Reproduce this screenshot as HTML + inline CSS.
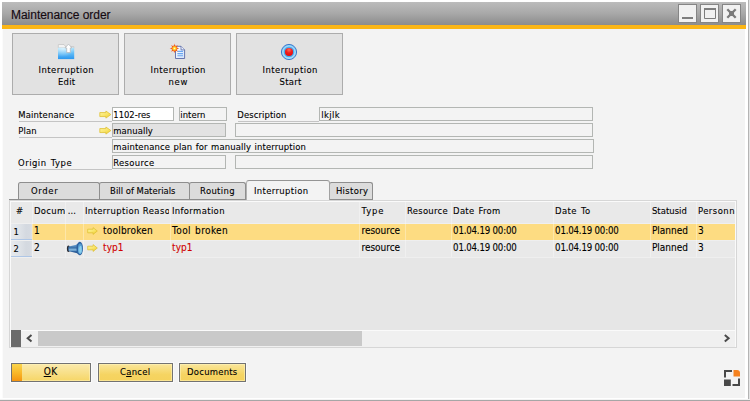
<!DOCTYPE html>
<html lang="en">
<head>
<meta charset="utf-8">
<title>Maintenance order</title>
<style>
html,body{margin:0;padding:0;background:#fff;}
body{width:750px;height:401px;position:relative;overflow:hidden;}
.win{position:absolute;left:0;top:0;width:750px;height:401px;overflow:hidden;}
.win div,.win span,.win svg,.win i{position:absolute;box-sizing:border-box;}
.win u{text-decoration:underline;text-underline-offset:1px;}
.t{white-space:nowrap;line-height:14px;height:14px;font-family:"DejaVu Sans Condensed","DejaVu Sans","Liberation Sans",sans-serif;font-stretch:condensed;font-size:9.4px;color:#000;-webkit-text-stroke:0.1px currentColor;}
.edgeR{left:748px;top:0;width:2px;height:401px;background:linear-gradient(90deg,#b4b4b4 0,#b4b4b4 1px,#e4e4e4 1px);}
.edgeB{left:0;top:399px;width:750px;height:2px;background:linear-gradient(#f2f2f2 0,#f2f2f2 .8px,#a6a6a6 .8px);}
.bodybg{left:2px;top:29px;width:743px;height:369px;background:#f3f3f3;border-left:1px solid #fbfbfb;}
.titlebar{left:2px;top:2px;width:744px;height:27px;background:linear-gradient(#bcbcbc 0,#a9a9a9 11px,#8d8d8d 22.6px,#fbb616 22.6px,#fbb616 27px);}
.wc{top:2px;width:19px;height:19px;border:1px solid #858585;background:#f1f1f1;}
.tb{top:33px;width:107px;height:62px;border:1px solid #acacac;background:#e2e2e2;}
.fld{height:14px;border:1px solid #b3b6b3;background:#f3f3f3;}
.fld.w{background:#fff;}
.fld.g{background:#e2e2e2;}
.ul{height:1px;background:#c4c4c4;}
.tab{top:182px;height:17px;border:1px solid #8e8e8e;border-bottom:none;border-radius:2.5px 2.5px 0 0;background:#dcdcdc;}
.tab.on{top:180px;height:20px;background:#f3f3f3;border-color:#949494 #a2a2a2 #949494 #b2b2b2;border-radius:3px 3px 0 0;}
.tabline{top:199px;height:1px;background:#8e8e8e;}
.panel{left:9px;top:200px;width:728px;height:148px;border:1px solid #d6d6d6;background:#fafafa;}
.grid{left:11px;top:202px;width:724px;height:128px;background:#e6e6e6;}
.ghead{left:0;top:0;width:724px;height:21px;background:#e9e9e9;}
.grow{left:0;width:724px;height:16px;}
.grow.sel{top:22px;background:#fddc82;}
.grow.r2{top:39px;background:#e9e9e9;}
.sepline{left:0;width:724px;height:1px;background:#efefef;}
.vsep{top:0;width:1px;height:55px;background:rgba(255,255,255,.32);}
.rn{left:0;width:21px;height:16px;background:linear-gradient(90deg,#e6e9ed 0,#dfe3e8 40%,#d4d9e0 72%,#d5dae1 88%,#dee2e7 100%);border-bottom:1px solid #aec6e6;}
.sb{left:11px;top:331px;width:724px;height:16px;background:#f0f0f0;}
.sbdark{left:0;top:-1px;width:10px;height:17px;background:#6b6b6b;}
.sbthumb{left:27px;top:0;width:324px;height:15px;background:#c9c9c9;}
.ybtn{top:363px;height:19px;border:1px solid #727272;background:linear-gradient(#fae69c 0,#f7dc7a 35%,#f5d462 62%,#f5d25c 100%);box-shadow:inset 0 0 0 1px rgba(255,244,190,.55),0 0 0 1px rgba(255,255,255,.55);}
.ybtn.ok{background:linear-gradient(#fbeaac 0,#f8e08a 50%,#f6d666 100%);}
.ybtn .focus{left:0;top:0;width:10px;height:17px;background:linear-gradient(#fbd54c 0,#f8b628 55%,#f59411 100%);}

</style>
</head>
<body>
<div class="win">
<div class="edgeR"></div><div class="edgeB"></div>
<div class="bodybg"></div>
<div class="titlebar">
  <div class="wc" style="left:676px"><svg width="17" height="17" viewBox="0 0 17 17" style="left:0;top:0"><rect x="3" y="12" width="11" height="2" fill="#7d7d7d"/></svg></div>
  <div class="wc" style="left:698px"><svg width="17" height="17" viewBox="0 0 17 17" style="left:0;top:0"><path d="M3.5 4 H14.5 V13.5 H3.5 Z" fill="none" stroke="#7d7d7d" stroke-width="1"/><rect x="3" y="3" width="12" height="2" fill="#7d7d7d"/></svg></div>
  <div class="wc" style="left:720px"><svg width="17" height="17" viewBox="0 0 17 17" style="left:0;top:0"><path d="M4.3 4.3 L12.7 12.7 M12.7 4.3 L4.3 12.7" stroke="#7b7b7b" stroke-width="2.3" fill="none"/><rect x="6" y="6" width="5" height="5" fill="#7b7b7b"/></svg></div>
</div>

<div class="tb" style="left:12px">
<svg width="18" height="17" viewBox="0 0 18 17" style="left:44px;top:10px">
 <defs><linearGradient id="fg" x1="0" y1="0" x2="0" y2="1"><stop offset="0" stop-color="#aee4fc"/><stop offset=".45" stop-color="#66bff7"/><stop offset="1" stop-color="#2b97ef"/></linearGradient>
 <radialGradient id="fh" cx=".3" cy=".1" r=".7"><stop offset="0" stop-color="#fff" stop-opacity=".55"/><stop offset="1" stop-color="#fff" stop-opacity="0"/></radialGradient></defs>
 <path d="M1.3 3.9 V.5 H7 L8.8 2.8 V3.9 Z" fill="#f3f3f3" stroke="#c6c6c6" stroke-width=".8"/>
 <path d="M9 2.5 H16.8 V4.2 H9 Z" fill="#eeeeee" stroke="#c2c2c2" stroke-width=".7"/>
 <rect x="1" y="3.8" width="16.2" height="11.3" fill="url(#fg)"/>
 <rect x="1" y="3.8" width="16.2" height="11.3" fill="url(#fh)"/>
 <path d="M11.5 0.1 L15 3.9 H13.3 V8.6 H9.7 V3.9 H8 Z" fill="#fff" stroke="#b4b8bc" stroke-width=".8" stroke-linejoin="round"/>
</svg>
</div>
<div class="tb" style="left:124px">
<svg width="20" height="18" viewBox="0 0 20 18" style="left:44px;top:9px">
 <defs><linearGradient id="dg" x1="0" y1="0" x2="1" y2="1"><stop offset="0" stop-color="#ffffff"/><stop offset="1" stop-color="#d2e3fa"/></linearGradient>
 <radialGradient id="sg" cx=".5" cy=".5" r=".5"><stop offset="0" stop-color="#fffbe0"/><stop offset=".45" stop-color="#ffd727"/><stop offset=".8" stop-color="#fb8a1c"/><stop offset="1" stop-color="#f0501c"/></radialGradient></defs>
 <path d="M6.5 3.3 H12 L15.6 6.9 V15.5 H6.5 Z" fill="url(#dg)" stroke="#5a69a6" stroke-width=".9"/>
 <path d="M12 3.3 V6.9 H15.6" fill="#eaf1fc" stroke="#5a69a6" stroke-width=".8"/>
 <path d="M8.4 8.4 H14 M8.4 10.6 H14 M8.4 12.7 H14" stroke="#6ba7f1" stroke-width="1.1"/>
 <g transform="translate(5.5 5.4)">
  <path d="M0 -4.8 L.8 -2 L3.4 -3.4 L2 -.8 L4.8 0 L2 .8 L3.4 3.4 L.8 2 L0 4.8 L-.8 2 L-3.4 3.4 L-2 .8 L-4.8 0 L-2 -.8 L-3.4 -3.4 L-.8 -2 Z" fill="#f5601f"/>
  <circle r="2.8" fill="url(#sg)"/>
 </g>
</svg>
</div>
<div class="tb" style="left:236px">
<svg width="18" height="18" viewBox="0 0 18 18" style="left:43px;top:9px">
 <defs><radialGradient id="rg" cx=".5" cy=".25" r=".75"><stop offset="0" stop-color="#fb6f5a"/><stop offset=".5" stop-color="#f21c1c"/><stop offset="1" stop-color="#e40d0d"/></radialGradient>
 <linearGradient id="bg1" x1="0" y1="0" x2="0" y2="1"><stop offset="0" stop-color="#74bdf3"/><stop offset="1" stop-color="#9edcfb"/></linearGradient></defs>
 <circle cx="9" cy="9" r="7.6" fill="url(#bg1)" stroke="#316fc8" stroke-width=".9"/>
 <circle cx="9" cy="9" r="6.1" fill="none" stroke="#a9e0fb" stroke-width="1"/>
 <circle cx="9" cy="9" r="5.2" fill="#45acf1"/>
 <circle cx="9" cy="9" r="4" fill="url(#rg)"/>
</svg>
</div>

<!-- form -->
<div class="ul" style="left:19px;top:121px;width:93px"></div>
<div class="ul" style="left:19px;top:137px;width:93px"></div>
<div class="ul" style="left:19px;top:169px;width:93px"></div>
<div class="ul" style="left:238px;top:121px;width:81px"></div>
<div class="fld w" style="left:112px;top:107px;width:62px"></div>
<div class="fld" style="left:179px;top:107px;width:48px"></div>
<div class="fld" style="left:319px;top:107px;width:274px"></div>
<div class="fld g" style="left:112px;top:123px;width:114px"></div>
<div class="fld" style="left:235px;top:123px;width:358px"></div>
<div class="fld" style="left:112px;top:139px;width:482px"></div>
<div class="fld" style="left:112px;top:155px;width:114px"></div>
<div class="fld" style="left:235px;top:155px;width:358px"></div>
<svg width="13" height="9" viewBox="0 0 13 9" style="left:98.5px;top:110px"><path d="M.8 2.55 H6.9 V1 L11.9 4.55 L6.9 8.1 V6.55 H.8 Z" fill="url(#ag)" stroke="#dfc236" stroke-width=".8" stroke-linejoin="round"/></svg>
<svg width="13" height="9" viewBox="0 0 13 9" style="left:98.5px;top:126px"><path d="M.8 2.55 H6.9 V1 L11.9 4.55 L6.9 8.1 V6.55 H.8 Z" fill="url(#ag)" stroke="#dfc236" stroke-width=".8" stroke-linejoin="round"/></svg>
<svg width="0" height="0" style="left:0;top:0"><defs>
 <linearGradient id="ag" x1="0" y1="0" x2=".8" y2="1"><stop offset="0" stop-color="#fdf6ac"/><stop offset=".55" stop-color="#f9e66c"/><stop offset="1" stop-color="#f1cf34"/></linearGradient>
</defs></svg>

<!-- tabs -->
<div class="tabline" style="left:9px;width:238px"></div>
<div class="tabline" style="left:329px;width:44px"></div>
<div class="panel"></div>
<div class="tab" style="left:18px;width:82px"></div>
<div class="tab" style="left:99px;width:91px"></div>
<div class="tab" style="left:189px;width:57px"></div>
<div class="tab" style="left:329px;width:44px"></div>
<div class="tab on" style="left:246px;width:84px"></div>

<!-- grid -->
<div class="grid">
 <div class="ghead"></div>
 <div class="sepline" style="top:21px"></div>
 <div class="grow sel"></div>
 <div class="sepline" style="top:38px"></div>
 <div class="grow r2"></div>
 <div class="sepline" style="top:55px"></div>
 <div class="rn" style="top:22px"></div>
 <div class="rn" style="top:39px"></div>
 <div class="vsep" style="left:21px"></div><div class="vsep" style="left:54px"></div><div class="vsep" style="left:72px"></div>
 <div class="vsep" style="left:159px"></div><div class="vsep" style="left:348px"></div><div class="vsep" style="left:394px"></div>
 <div class="vsep" style="left:440px"></div><div class="vsep" style="left:542px"></div><div class="vsep" style="left:639px"></div><div class="vsep" style="left:685px"></div>
 <svg width="12" height="8" viewBox="0 0 12 8" style="left:75.5px;top:24.8px"><path d="M.7 2.2 H6.1 V.6 L10.3 4 L6.1 7.4 V5.8 H.7 Z" fill="url(#ag)" stroke="#dfc236" stroke-width=".8" stroke-linejoin="round"/></svg>
 <svg width="12" height="8" viewBox="0 0 12 8" style="left:75.5px;top:41.8px"><path d="M.7 2.2 H6.1 V.6 L10.3 4 L6.1 7.4 V5.8 H.7 Z" fill="url(#ag)" stroke="#dfc236" stroke-width=".8" stroke-linejoin="round"/></svg>
 <svg width="18" height="16" viewBox="0 0 18 16" style="left:55px;top:39px">
  <defs><linearGradient id="mg" x1="0" y1="0" x2="0" y2="1"><stop offset="0" stop-color="#6fa5d3"/><stop offset=".38" stop-color="#3a71a9"/><stop offset=".62" stop-color="#8dbfe1"/><stop offset=".8" stop-color="#2f64a0"/><stop offset="1" stop-color="#1d4a80"/></linearGradient>
  <linearGradient id="mb" x1="0" y1="0" x2="0" y2="1"><stop offset="0" stop-color="#4d97cf"/><stop offset="1" stop-color="#7cc6ea"/></linearGradient></defs>
  <ellipse cx="2.4" cy="7.8" rx="1.5" ry="3.2" fill="#2b2d33"/>
  <ellipse cx="2.9" cy="7.8" rx=".9" ry="2.3" fill="#3b5f8c"/>
  <path d="M2.9 5.5 L11.4 3.4 V12.3 L2.9 10.3 Z" fill="url(#mg)"/>
  <path d="M10.6 3.6 L13.8 .8 V14.2 L10.6 12.1 Z" fill="#2f67a4"/>
  <ellipse cx="13.9" cy="7.5" rx="3.1" ry="6.7" fill="#2c61a0"/>
  <ellipse cx="14.1" cy="7.7" rx="2.1" ry="5.2" fill="url(#mb)"/>
  <ellipse cx="14.4" cy="8.2" rx="1.2" ry="3.3" fill="#8bd0ee"/>
 </svg>
</div>
<div class="sb">
 <div class="sbdark"></div>
 <div class="sbthumb"></div>
 <svg width="8" height="9" viewBox="0 0 8 9" style="left:14px;top:2.8px"><path d="M6.5 1 L2.7 4.2 L6.5 7.4" fill="none" stroke="#4a4a4a" stroke-width="2"/></svg>
 <svg width="8" height="9" viewBox="0 0 8 9" style="left:712px;top:2.8px"><path d="M1.8 1 L5.6 4.2 L1.8 7.4" fill="none" stroke="#4a4a4a" stroke-width="2"/></svg>
</div>

<!-- bottom buttons -->
<div class="ybtn ok" style="left:11px;width:80px"><div class="focus"></div></div>
<div class="ybtn" style="left:98px;width:75px"></div>
<div class="ybtn" style="left:179px;width:67px"></div>

<!-- resize/logo icon -->
<svg width="16" height="16" viewBox="0 0 16 16" style="left:724px;top:370px">
 <path d="M0 7.5 V0 H8 V2 H2 V7.5 Z" fill="#484848"/>
 <path d="M9.5 0 H13 Q16 0 16 3 V6.5 H9.5 Z" fill="#f5821f"/>
 <rect x="0" y="9.5" width="6.8" height="6.5" fill="#484848"/>
 <path d="M16 8.5 V16 H8.5 V14 H14 V8.5 Z" fill="#484848"/>
</svg>

<span class="t" style="font-family:'Liberation Sans','DejaVu Sans',sans-serif;font-stretch:normal;font-size:12px;color:#150a12;left:11.00px;top:7.80px;letter-spacing:-0.033px;-webkit-text-stroke:0.15px currentColor;">Maintenance order</span>
<span class="t" style="left:38.50px;top:63.00px;letter-spacing:0.471px;">Interruption</span>
<span class="t" style="left:57.90px;top:75.00px;letter-spacing:0.314px;">Edit</span>
<span class="t" style="left:150.50px;top:63.00px;letter-spacing:0.454px;">Interruption</span>
<span class="t" style="left:168.50px;top:75.00px;letter-spacing:0.721px;">new</span>
<span class="t" style="left:262.50px;top:63.00px;letter-spacing:0.454px;">Interruption</span>
<span class="t" style="left:279.50px;top:75.00px;letter-spacing:0.278px;">Start</span>
<span class="t" style="left:18.20px;top:107.80px;letter-spacing:0.179px;">Maintenance</span>
<span class="t" style="left:18.20px;top:123.80px;letter-spacing:0.187px;">Plan</span>
<span class="t" style="left:18.00px;top:155.80px;letter-spacing:0.518px;word-spacing:1.00px;">Origin Type</span>
<span class="t" style="left:113.30px;top:107.80px;letter-spacing:-0.020px;">1102-res</span>
<span class="t" style="left:180.30px;top:107.80px;letter-spacing:0.059px;">intern</span>
<span class="t" style="left:237.30px;top:107.80px;letter-spacing:0.105px;">Description</span>
<span class="t" style="left:321.30px;top:107.80px;letter-spacing:0.357px;">lkjlk</span>
<span class="t" style="left:113.30px;top:123.80px;letter-spacing:0.083px;">manually</span>
<span class="t" style="left:113.30px;top:139.80px;letter-spacing:0.135px;word-spacing:0.61px;">maintenance plan for manually interruption</span>
<span class="t" style="left:113.30px;top:155.80px;letter-spacing:0.322px;">Resource</span>
<span class="t" style="left:30.90px;top:183.70px;letter-spacing:0.729px;">Order</span>
<span class="t" style="left:110.10px;top:183.70px;letter-spacing:0.025px;">Bill of Materials</span>
<span class="t" style="left:200.10px;top:183.70px;letter-spacing:0.358px;">Routing</span>
<span class="t" style="left:253.90px;top:183.70px;letter-spacing:0.387px;">Interruption</span>
<span class="t" style="left:335.90px;top:183.70px;letter-spacing:0.369px;">History</span>
<span class="t" style="left:15.90px;top:203.70px;">#</span>
<span class="t" style="left:33.90px;top:203.70px;letter-spacing:0.340px;width:31.5px;overflow:hidden;">Docum</span>
<span class="t" style="left:67.80px;top:203.70px;letter-spacing:0.084px;">...</span>
<span class="t" style="left:84.90px;top:203.70px;letter-spacing:0.410px;width:84.6px;overflow:hidden;">Interruption Reason</span>
<span class="t" style="left:171.90px;top:203.70px;letter-spacing:0.381px;">Information</span>
<span class="t" style="left:361.50px;top:203.70px;letter-spacing:0.941px;">Type</span>
<span class="t" style="left:406.90px;top:203.70px;letter-spacing:0.322px;">Resource</span>
<span class="t" style="left:453.10px;top:203.70px;letter-spacing:0.305px;word-spacing:1.00px;">Date From</span>
<span class="t" style="left:555.10px;top:203.70px;letter-spacing:0.405px;word-spacing:1.00px;">Date To</span>
<span class="t" style="left:651.90px;top:203.70px;letter-spacing:0.053px;">Statusid</span>
<span class="t" style="left:697.90px;top:203.70px;letter-spacing:0.500px;width:37px;overflow:hidden;">Personnel</span>
<span class="t" style="left:13.50px;top:225.10px;">1</span>
<span class="t" style="font-size:10.0px;left:34.00px;top:224.30px;">1</span>
<span class="t" style="font-size:10.0px;left:103.10px;top:224.30px;letter-spacing:0.197px;">toolbroken</span>
<span class="t" style="font-size:10.0px;left:172.10px;top:224.30px;letter-spacing:0.368px;word-spacing:1.00px;">Tool broken</span>
<span class="t" style="font-size:10.0px;left:361.50px;top:224.30px;letter-spacing:-0.034px;">resource</span>
<span class="t" style="font-size:9.6px;left:453.10px;top:224.30px;letter-spacing:-0.189px;">01.04.19 00:00</span>
<span class="t" style="font-size:9.6px;left:555.10px;top:224.30px;letter-spacing:-0.189px;">01.04.19 00:00</span>
<span class="t" style="font-size:10.0px;left:651.90px;top:224.30px;letter-spacing:0.015px;">Planned</span>
<span class="t" style="font-size:10.0px;left:697.90px;top:224.30px;">3</span>
<span class="t" style="left:13.50px;top:242.10px;">2</span>
<span class="t" style="font-size:10.0px;left:34.00px;top:241.30px;">2</span>
<span class="t" style="font-size:10.0px;color:#d00000;left:103.10px;top:241.30px;letter-spacing:0.026px;">typ1</span>
<span class="t" style="font-size:10.0px;color:#d00000;left:172.10px;top:241.30px;letter-spacing:0.026px;">typ1</span>
<span class="t" style="font-size:10.0px;left:361.50px;top:241.30px;letter-spacing:-0.034px;">resource</span>
<span class="t" style="font-size:9.6px;left:453.10px;top:241.30px;letter-spacing:-0.189px;">01.04.19 00:00</span>
<span class="t" style="font-size:9.6px;left:555.10px;top:241.30px;letter-spacing:-0.189px;">01.04.19 00:00</span>
<span class="t" style="font-size:10.0px;left:651.90px;top:241.30px;letter-spacing:0.015px;">Planned</span>
<span class="t" style="font-size:10.0px;left:697.90px;top:241.30px;">3</span>
<span class="t" style="font-size:10px;left:43.70px;top:364.60px;letter-spacing:0.350px;"><u>O</u>K</span>
<span class="t" style="left:119.90px;top:364.60px;letter-spacing:0.332px;">C<u>a</u>ncel</span>
<span class="t" style="left:187.10px;top:364.60px;letter-spacing:0.256px;">Documents</span>
</div>

</body>
</html>
